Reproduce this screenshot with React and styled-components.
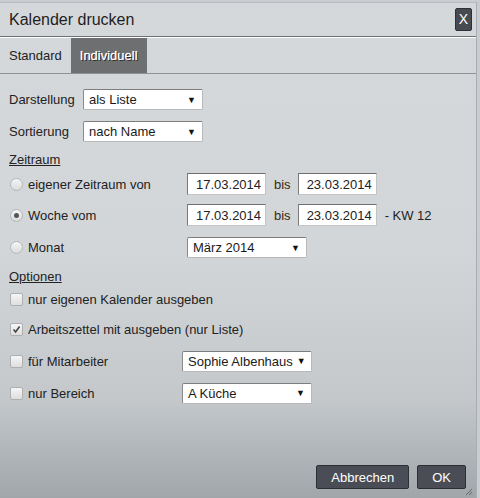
import React from 'react'
import styled, { createGlobalStyle } from 'styled-components'

const GlobalStyle = createGlobalStyle`
  html, body {
    margin: 0;
    padding: 0;
    background: #c9ccd0;
  }
  body {
    font-family: Arial, "Liberation Sans", sans-serif;
    font-size: 13px;
    color: #222;
  }
`

const Dialog = styled.div`
  width: 477px;
  height: 496px;
  margin-top: 2px;
  display: flex;
  flex-direction: column;
  background: linear-gradient(to bottom, #d5d8db 0%, #d3d6d9 50%, #c4c8cb 80%, #a0a6aa 100%);
  border-top: 1px solid #b8bcc0;
  border-right: 1px solid #a9adb1;
  box-sizing: border-box;
  position: relative;
`

const TitleBar = styled.div`
  height: 33px;
  display: flex;
  align-items: center;
  justify-content: space-between;
  padding: 0 4px 0 9px;
  border-bottom: 1px solid #6d7176;
`

const Title = styled.span`
  font-size: 16px;
  color: #1e1e1e;
`

const CloseButton = styled.button`
  width: 17px;
  height: 23px;
  padding: 0;
  border: 1px solid #2f3136;
  border-radius: 2px;
  background: #474a51;
  color: #fff;
  font-family: Arial, "Liberation Sans", sans-serif;
  font-size: 14px;
  line-height: 21px;
`

const TabBar = styled.div`
  height: 35px;
  display: flex;
  border-top: 1px solid #fff;
  border-bottom: 1px solid #8e9296;
`

const Tab = styled.div`
  display: flex;
  align-items: center;
  padding: 0 9px;
  font-size: 13px;
  background: ${p => (p.$active ? '#6e6f71' : 'transparent')};
  color: ${p => (p.$active ? '#fff' : '#222')};
  text-shadow: ${p => (p.$active ? '1px 1px 0 #2b2b2b, 0 0 1px #fff' : 'none')};
`

const Content = styled.div`
  padding: 15px 9px 0 9px;
  display: flex;
  flex-direction: column;
`

const Row = styled.div`
  display: flex;
  align-items: center;
  height: ${p => p.$h || 22}px;
  margin-bottom: ${p => p.$mb || 0}px;
`

const Label = styled.span`
  width: ${p => p.$w}px;
  flex-shrink: 0;
`

const Heading = styled.div`
  text-decoration: underline;
  font-size: 13px;
  height: 16px;
  line-height: 16px;
  margin-bottom: ${p => p.$mb || 0}px;
`

const Select = styled.div`
  width: ${p => p.$w}px;
  height: 21px;
  box-sizing: border-box;
  display: flex;
  align-items: center;
  justify-content: space-between;
  padding: 0 6px 0 5px;
  background: #fff;
  border: 1px solid #b8b8b8;
  border-top-color: #7d7d7d;
  border-left-color: #8a8a8a;
  border-radius: 2px;
  font-size: 13px;
  color: #1a1a1a;
  white-space: nowrap;
  overflow: hidden;
`

const Arrow = styled.span`
  font-size: 9px;
  color: #111;
  margin-left: 4px;
`

const DateInput = styled.div`
  width: 79px;
  height: 22px;
  box-sizing: border-box;
  padding-left: 8px;
  display: flex;
  align-items: center;
  background: #fff;
  border: 1px solid #c4c4c4;
  border-top-color: #6f6f6f;
  border-left-color: #7a7a7a;
  font-size: 13px;
`

const Bis = styled.span`
  margin: 0 7px 0 8px;
  color: #3a2a10;
`

const Suffix = styled.span`
  margin-left: 8px;
`

const Radio = styled.span`
  width: 11px;
  height: 11px;
  border-radius: 50%;
  border: 1px solid #b4b6b8;
  background: linear-gradient(to bottom, #f4f4f4, #dcdcdc);
  margin: 0 5px 0 1px;
  display: flex;
  align-items: center;
  justify-content: center;
  flex-shrink: 0;
  &::after {
    content: '';
    display: ${p => (p.$checked ? 'block' : 'none')};
    width: 5px;
    height: 5px;
    border-radius: 50%;
    background: #555;
  }
`

const Check = styled.span`
  width: 11px;
  height: 11px;
  border-radius: 2px;
  border: 1px solid #adafb1;
  background: linear-gradient(to bottom, #f6f6f6, #dedede);
  margin: 0 5px 0 1px;
  display: flex;
  align-items: center;
  justify-content: center;
  flex-shrink: 0;
`

const Footer = styled.div`
  margin-top: auto;
  display: flex;
  justify-content: flex-end;
  gap: 8px;
  padding: 0 10px 9px 0;
`

const Button = styled.button`
  height: 24px;
  padding: 0 ${p => p.$px || 14}px;
  background: #4b4d56;
  border: 1px solid #2c2e33;
  border-radius: 2px;
  color: #fff;
  font-family: Arial, "Liberation Sans", sans-serif;
  font-size: 13px;
`

const Grip = styled.svg`
  position: absolute;
  right: 3px;
  bottom: 2px;
`

function CheckBox ({ checked }) {
  return (
    <Check>
      {checked && (
        <svg width='9' height='9' viewBox='0 0 9 9'>
          <path d='M1.5 4.5 L3.6 7 L7.6 1.5' fill='none' stroke='#444' strokeWidth='1.6' />
        </svg>
      )}
    </Check>
  )
}

function Dropdown ({ width, children }) {
  return (
    <Select $w={width}>
      <span>{children}</span>
      <Arrow>▼</Arrow>
    </Select>
  )
}

export default function App () {
  return (
    <>
      <GlobalStyle />
      <Dialog>
        <TitleBar>
          <Title>Kalender drucken</Title>
          <CloseButton>X</CloseButton>
        </TitleBar>
        <TabBar>
          <Tab>Standard</Tab>
          <Tab $active>Individuell</Tab>
        </TabBar>
        <Content>
          <Row $h={21} $mb={11}>
            <Label $w={74}>Darstellung</Label>
            <Dropdown width={120}>als Liste</Dropdown>
          </Row>
          <Row $h={21} $mb={10}>
            <Label $w={74}>Sortierung</Label>
            <Dropdown width={120}>nach Name</Dropdown>
          </Row>
          <Heading $mb={5}>Zeitraum</Heading>
          <Row $mb={9}>
            <Radio />
            <Label $w={159}>eigener Zeitraum von</Label>
            <DateInput>17.03.2014</DateInput>
            <Bis>bis</Bis>
            <DateInput>23.03.2014</DateInput>
          </Row>
          <Row $mb={11}>
            <Radio $checked />
            <Label $w={159}>Woche vom</Label>
            <DateInput>17.03.2014</DateInput>
            <Bis>bis</Bis>
            <DateInput>23.03.2014</DateInput>
            <Suffix>- KW 12</Suffix>
          </Row>
          <Row $h={21} $mb={11}>
            <Radio />
            <Label $w={159}>Monat</Label>
            <Dropdown width={120}>März 2014</Dropdown>
          </Row>
          <Heading $mb={6}>Optionen</Heading>
          <Row $h={16} $mb={14}>
            <CheckBox />
            <span>nur eigenen Kalender ausgeben</span>
          </Row>
          <Row $h={16} $mb={13}>
            <CheckBox checked />
            <span>Arbeitszettel mit ausgeben (nur Liste)</span>
          </Row>
          <Row $h={22} $mb={10}>
            <CheckBox />
            <Label $w={154}>für Mitarbeiter</Label>
            <Dropdown width={130}>Sophie Albenhaus</Dropdown>
          </Row>
          <Row $h={22}>
            <CheckBox />
            <Label $w={154}>nur Bereich</Label>
            <Dropdown width={130}>A Küche</Dropdown>
          </Row>
        </Content>
        <Footer>
          <Button $px={14}>Abbrechen</Button>
          <Button $px={14}>OK</Button>
        </Footer>
        <Grip width='8' height='8' viewBox='0 0 8 8'>
          <path d='M7 1 L1 7 M7 4 L4 7 M7 6.5 L6.5 7' stroke='#666' strokeWidth='1' />
        </Grip>
      </Dialog>
    </>
  )
}
